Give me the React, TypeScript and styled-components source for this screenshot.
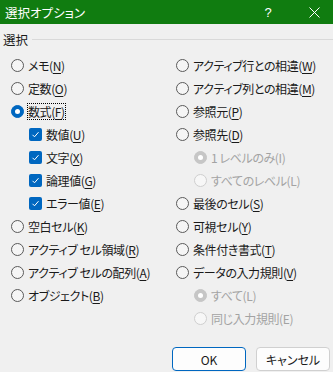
import React from "react";
import styled, { createGlobalStyle } from "styled-components";

const Global = createGlobalStyle`
  html, body { margin: 0; padding: 0; background: #f0f0f0; }
  body {
    font-family: "Noto Sans CJK JP", "Noto Sans", sans-serif;
    font-size: 12px;
    color: #1a1a1a;
    font-feature-settings: "palt";
  }
`;

const Dialog = styled.div`
  width: 333px;
  height: 372px;
  background: #f0f0f0;
  display: flex;
  flex-direction: column;
  overflow: hidden;
`;

const TitleBar = styled.div`
  height: 24px;
  background: #107c10;
  color: #fff;
  display: flex;
  align-items: center;
  padding-left: 5px;
  font-size: 12.5px;
`;

const TitleText = styled.div`
  flex: 1;
`;

const Help = styled.div`
  width: 20px;
  margin-right: 31px;
  text-align: center;
  font-family: "Liberation Sans", sans-serif;
  font-size: 13px;
`;

const Close = styled.div`
  width: 11px;
  margin-right: 13px;
  display: flex;
  align-items: center;
`;

const GroupHead = styled.div`
  display: flex;
  align-items: center;
  height: 30px;
  padding-left: 3px;
  gap: 4px;
`;

const GroupLabel = styled.span`
  font-size: 12.5px;
`;

const Rule = styled.div`
  flex: 1;
  height: 1px;
  background: #d9d9d9;
`;

const Columns = styled.div`
  display: grid;
  grid-template-columns: 165px 1fr;
  padding-left: 11px;
`;

const Col = styled.div`
  display: flex;
  flex-direction: column;
`;

const Row = styled.div<{ $indent?: boolean; $disabled?: boolean }>`
  height: 23px;
  display: flex;
  align-items: center;
  gap: 4px;
  padding-left: ${(p) => (p.$indent ? "18px" : "0")};
  color: ${(p) => (p.$disabled ? "#a3a3a3" : "#1a1a1a")};
  white-space: nowrap;
`;

const Label = styled.span<{ $focus?: boolean }>`
  border: 1px dotted ${(p) => (p.$focus ? "#000" : "transparent")};
  line-height: 15px;
  margin-left: -1px;
  letter-spacing: -0.4px;
`;

const U = styled.span`
  text-decoration: underline;
  text-underline-offset: 2px;
`;

const RadioCircle = styled.span<{ $checked?: boolean; $disabled?: boolean }>`
  width: 13px;
  height: 13px;
  box-sizing: border-box;
  border-radius: 50%;
  flex: none;
  display: flex;
  align-items: center;
  justify-content: center;
  border: 1px solid
    ${(p) =>
      p.$checked
        ? p.$disabled
          ? "#c6c6c6"
          : "#0067c0"
        : p.$disabled
        ? "#cfcfcf"
        : "#5a5a5a"};
  background: ${(p) =>
    p.$checked ? (p.$disabled ? "#c6c6c6" : "#0067c0") : p.$disabled ? "#f7f7f7" : "#f5f5f5"};
  &::after {
    content: "";
    display: ${(p) => (p.$checked ? "block" : "none")};
    width: 5px;
    height: 5px;
    border-radius: 50%;
    background: #fff;
  }
`;

const CheckBox = styled.span`
  width: 13px;
  height: 13px;
  border-radius: 2px;
  background: #0067c0;
  flex: none;
  display: flex;
  align-items: center;
  justify-content: center;
`;

const Footer = styled.div`
  display: flex;
  justify-content: flex-end;
  gap: 10px;
  padding: 17px 3px 0 0;
`;

const Button = styled.button<{ $primary?: boolean }>`
  width: 74px;
  height: 24px;
  box-sizing: border-box;
  border-radius: 4px;
  border: 1px solid ${(p) => (p.$primary ? "#0067c0" : "#d0d0d0")};
  background: #fdfdfd;
  font-family: "Noto Sans CJK JP", "Noto Sans", sans-serif;
  font-feature-settings: "palt";
  font-size: 12px;
  color: #1a1a1a;
  padding: 0;
`;

type Item = {
  text: string;
  key?: string;
  kind: "radio" | "check";
  checked?: boolean;
  disabled?: boolean;
  indent?: boolean;
  focus?: boolean;
};

const left: Item[] = [
  { text: "メモ", key: "N", kind: "radio" },
  { text: "定数", key: "O", kind: "radio" },
  { text: "数式", key: "F", kind: "radio", checked: true, focus: true },
  { text: "数値", key: "U", kind: "check", indent: true },
  { text: "文字", key: "X", kind: "check", indent: true },
  { text: "論理値", key: "G", kind: "check", indent: true },
  { text: "エラー値", key: "E", kind: "check", indent: true },
  { text: "空白セル", key: "K", kind: "radio" },
  { text: "アクティブ セル領域", key: "R", kind: "radio" },
  { text: "アクティブ セルの配列", key: "A", kind: "radio" },
  { text: "オブジェクト", key: "B", kind: "radio" },
];

const right: Item[] = [
  { text: "アクティブ行との相違", key: "W", kind: "radio" },
  { text: "アクティブ列との相違", key: "M", kind: "radio" },
  { text: "参照元", key: "P", kind: "radio" },
  { text: "参照先", key: "D", kind: "radio" },
  { text: "1 レベルのみ(I)", kind: "radio", indent: true, disabled: true, checked: true },
  { text: "すべてのレベル(L)", kind: "radio", indent: true, disabled: true },
  { text: "最後のセル", key: "S", kind: "radio" },
  { text: "可視セル", key: "Y", kind: "radio" },
  { text: "条件付き書式", key: "T", kind: "radio" },
  { text: "データの入力規則", key: "V", kind: "radio" },
  { text: "すべて(L)", kind: "radio", indent: true, disabled: true, checked: true },
  { text: "同じ入力規則(E)", kind: "radio", indent: true, disabled: true },
];

const Check = () => (
  <svg width="9" height="9" viewBox="0 0 9 9">
    <path d="M1.5 4.8 L3.5 6.8 L7.5 2.2" fill="none" stroke="#fff" strokeWidth="1" />
  </svg>
);

const Option = ({ item }: { item: Item }) => (
  <Row $indent={item.indent} $disabled={item.disabled}>
    {item.kind === "radio" ? (
      <RadioCircle $checked={item.checked} $disabled={item.disabled} />
    ) : (
      <CheckBox>
        <Check />
      </CheckBox>
    )}
    <Label $focus={item.focus}>
      {item.text}
      {item.key && (
        <>
          (<U>{item.key}</U>)
        </>
      )}
    </Label>
  </Row>
);

export default function App() {
  return (
    <>
      <Global />
      <Dialog>
        <TitleBar>
          <TitleText>選択オプション</TitleText>
          <Help>?</Help>
          <Close>
            <svg width="11" height="11" viewBox="0 0 11 11">
              <path d="M0.5 0.5 L10.5 10.5 M10.5 0.5 L0.5 10.5" stroke="#fff" strokeWidth="1" />
            </svg>
          </Close>
        </TitleBar>
        <GroupHead>
          <GroupLabel>選択</GroupLabel>
          <Rule />
        </GroupHead>
        <Columns>
          <Col>
            {left.map((it) => (
              <Option key={it.text} item={it} />
            ))}
          </Col>
          <Col>
            {right.map((it) => (
              <Option key={it.text} item={it} />
            ))}
          </Col>
        </Columns>
        <Footer>
          <Button $primary>OK</Button>
          <Button>キャンセル</Button>
        </Footer>
      </Dialog>
    </>
  );
}
